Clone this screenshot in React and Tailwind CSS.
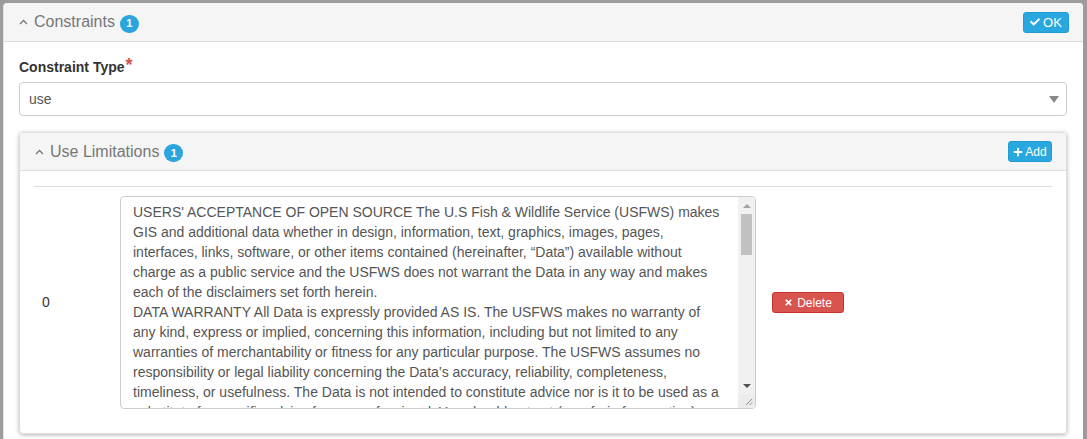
import React from "react";
import { FaCheck, FaPlus, FaTimes } from "react-icons/fa";

const TEXT =
  "USERS' ACCEPTANCE OF OPEN SOURCE The U.S Fish & Wildlife Service (USFWS) makes GIS and additional data whether in design, information, text, graphics, images, pages, interfaces, links, software, or other items contained (hereinafter, \u201cData\u201d) available without charge as a public service and the USFWS does not warrant the Data in any way and makes each of the disclaimers set forth herein.\nDATA WARRANTY All Data is expressly provided AS IS. The USFWS makes no warranty of any kind, express or implied, concerning this information, including but not limited to any warranties of merchantability or fitness for any particular purpose. The USFWS assumes no responsibility or legal liability concerning the Data\u2019s accuracy, reliability, completeness, timeliness, or usefulness. The Data is not intended to constitute advice nor is it to be used as a substitute for specific advice from a professional. You should not act (or refrain from acting) based upon information in the Data without independently verifying the information and obtaining any necessary professional advice regarding your particular facts and circumstances.";

function Chevron() {
  return (
    <svg width="9" height="6" viewBox="0 0 9 6" className="shrink-0">
      <path d="M1 5 L4.5 1.5 L8 5" fill="none" stroke="#777" strokeWidth="1.3" />
    </svg>
  );
}

function Badge() {
  return (
    <span className="inline-flex items-center justify-center w-[19px] h-[18px] rounded-full bg-[#2aa5de] text-white text-[11px] font-bold leading-none">
      1
    </span>
  );
}

function FakeScrollbar() {
  return (
    <div className="w-[17px] bg-[#f1f1f1] flex flex-col items-center shrink-0">
      <div className="h-[17px] w-full flex items-center justify-center">
        <span className="w-0 h-0 border-l-[4px] border-r-[4px] border-b-[4px] border-l-transparent border-r-transparent border-b-[#a3a3a3]" />
      </div>
      <div className="w-[11px] h-[41px] bg-[#c1c1c1]" />
      <div className="flex-1" />
      <div className="h-[17px] w-full flex items-center justify-center">
        <span className="w-0 h-0 border-l-[4px] border-r-[4px] border-t-[4px] border-l-transparent border-r-transparent border-t-[#505050]" />
      </div>
      <div className="h-[14px] w-full flex items-end justify-end pr-[2px] pb-[2px] bg-[#ececec]">
        <svg width="8" height="8" viewBox="0 0 8 8">
          <path d="M7 1 L1 7 M7 4.5 L4.5 7" stroke="#888" strokeWidth="0.9" fill="none" />
        </svg>
      </div>
    </div>
  );
}

export default function App() {
  return (
    <div
      className="w-[1087px] h-[439px] overflow-hidden bg-[#9c9c9c] pt-[3px] pl-[3px] pr-[4px]"
      style={{ fontFamily: '"Liberation Sans", Arial, sans-serif' }}
    >
      <div className="bg-white rounded-t-[4px] h-[460px] border-l border-[#e3e3e3]">
        {/* Outer heading */}
        <div className="h-[39px] bg-[#f5f5f5] border-b border-[#dddddd] rounded-t-[4px] flex items-center pl-[15px] pr-[14px]">
          <Chevron />
          <span className="ml-[6px] text-[16px] text-[#777] leading-none">Constraints</span>
          <span className="ml-[5px]">
            <Badge />
          </span>
          <div className="flex-1" />
          <button className="h-[21px] w-[46px] bg-[#29a8df] border border-[#1f9bd3] rounded-[3px] text-white text-[13px] flex items-center justify-center gap-[3px] leading-none">
            <FaCheck className="w-[10px] h-[10px]" />
            OK
          </button>
        </div>

        {/* Outer body */}
        <div className="pl-[15px] pr-[16px] pt-[17px]">
          <div className="text-[14px] font-bold text-[#333] leading-[16px] flex">
            Constraint Type
            <span className="text-[#d9534f] text-[18px] leading-[12px] ml-[1px]">*</span>
          </div>
          <div className="mt-[7px] h-[34px] border border-[#cccccc] rounded-[4px] flex items-center pl-[9px] pr-[7px] text-[14px] text-[#555]">
            <span>use</span>
            <div className="flex-1" />
            <span className="w-0 h-0 border-l-[5px] border-r-[5px] border-t-[7px] border-l-transparent border-r-transparent border-t-[#888]" />
          </div>

          {/* Inner panel */}
          <div className="mt-[16px] border border-[#dddddd] rounded-[4px] shadow-[0_1px_4px_rgba(0,0,0,0.3)] h-[302px] overflow-hidden">
            <div className="h-[38px] bg-[#f5f5f5] border-b border-[#dddddd] flex items-center pl-[15px] pr-[14px]">
              <Chevron />
              <span className="ml-[6px] text-[16px] text-[#777] leading-none">Use Limitations</span>
              <span className="ml-[5px]">
                <Badge />
              </span>
              <div className="flex-1" />
              <button className="h-[21px] w-[44px] bg-[#29a8df] border border-[#1f9bd3] rounded-[3px] text-white text-[12px] flex items-center justify-center gap-[2px] leading-none">
                <FaPlus className="w-[10px] h-[10px]" />
                Add
              </button>
            </div>
            <div className="px-[14px] pt-[15px]">
              <div className="border-t border-[#dddddd]" />
              <div className="mt-[9px] flex items-center">
                <div className="w-[86px] pl-[8px] text-[14px] text-[#333]">0</div>
                <div className="w-[636px] h-[213px] border border-[#cccccc] rounded-[4px] flex overflow-hidden">
                  <textarea
                    readOnly
                    defaultValue={TEXT}
                    className="flex-1 h-full px-[12px] py-[5px] text-[14px] leading-[20px] text-[#555] resize-none overflow-hidden outline-none"
                    style={{ fontFamily: '"Liberation Sans", Arial, sans-serif' }}
                  />
                  <FakeScrollbar />
                </div>
                <button className="ml-[16px] h-[21px] w-[72px] bg-[#d9534f] border border-[#c9302c] rounded-[3px] text-white text-[12px] font-bold flex items-center justify-center gap-[4px] leading-none">
                  <FaTimes className="w-[9px] h-[9px]" />
                  <span className="font-normal">Delete</span>
                </button>
              </div>
            </div>
          </div>
        </div>
      </div>
    </div>
  );
}
